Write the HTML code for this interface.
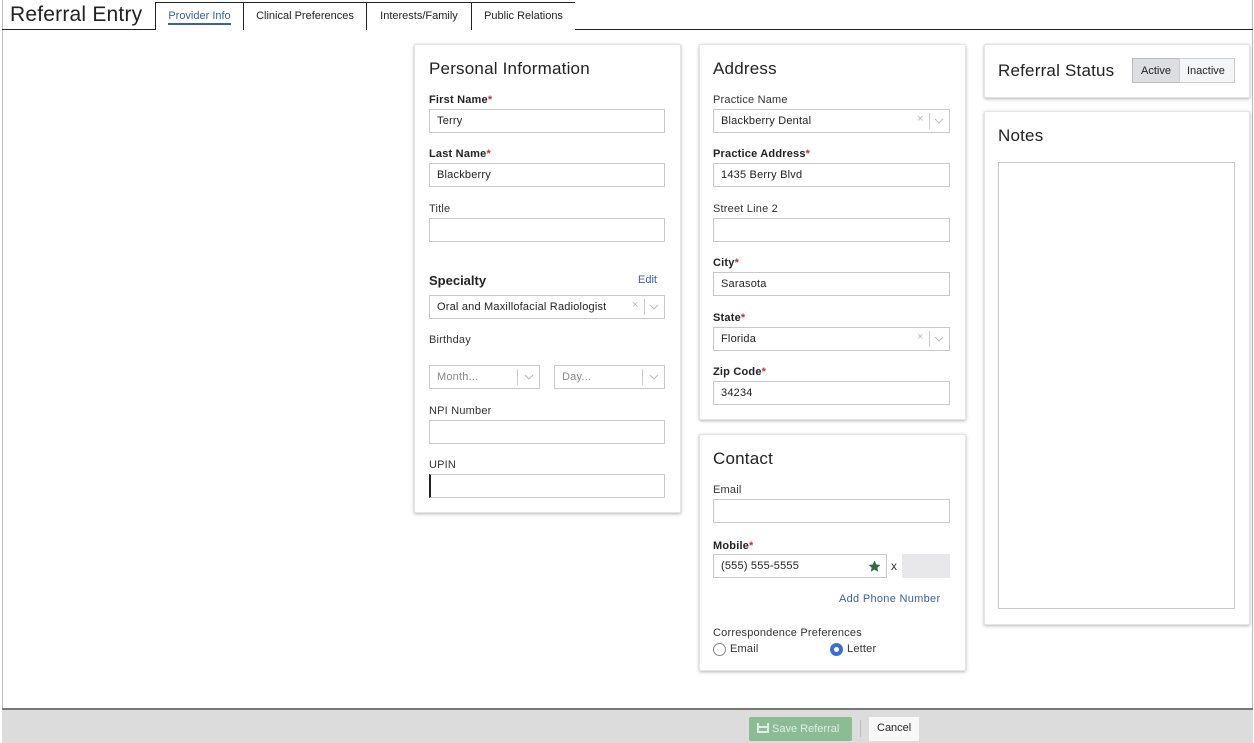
<!DOCTYPE html>
<html><head><meta charset="utf-8"><style>
*{box-sizing:border-box;margin:0;padding:0}
body{width:1254px;height:743px;position:relative;background:#fff;font-family:"Liberation Sans",sans-serif;color:#222;overflow:hidden;font-size:11px}
.a{position:absolute}
.frame{left:2px;top:0;width:1251px;height:743px;border-left:1px solid #bbb;border-right:1px solid #bbb}
.hline{left:2px;top:29px;width:1251px;height:1px;background:#222}
.title{left:10px;top:3px;font-size:21px;color:#222;letter-spacing:0.2px}
.tab{top:2px;height:28px;border:1px solid #222;border-bottom:none;background:#fff;font-size:11px;padding:7px 0 0 0;text-align:center}
.card{background:#fff;border-radius:2px;box-shadow:0 1px 3px rgba(0,0,0,.3);border:1px solid #e4e4e4}
.h{font-size:17px;color:#222;letter-spacing:0.2px}
.lb{font-size:11px;color:#333;letter-spacing:0.2px}
.b{font-weight:bold;color:#222}
.req{color:#b33}
.in{height:24px;border:1px solid #c8c8c8;background:#fff;font-size:11px;padding:5px 0 0 7px;color:#222;letter-spacing:0.2px}
.sel .ctl{position:absolute;right:0;top:3px;height:16px;width:34px;color:#bbb;font-size:11px}
.sel .ctl span.x{position:absolute;left:2px;top:0}
.sel .ctl span.bar{position:absolute;left:14px;top:0;width:1px;height:16px;background:#ccc}
.sel .ctl svg{position:absolute;left:19px;top:5px}
.ph{color:#888}
</style></head><body>
<div class="a frame"></div>
<div class="a hline"></div>
<div class="a title">Referral Entry</div>
<div class="a tab" style="left:155px;width:89px;color:#3a5ea8"><span style="border-bottom:2px solid #3a5ea8;padding-bottom:1px">Provider Info</span></div>
<div class="a tab" style="left:243px;width:124px">Clinical Preferences</div>
<div class="a tab" style="left:366px;width:106px">Interests/Family</div>
<div class="a tab" style="left:471px;width:104px;border-right:none">Public Relations</div>

<div class="a card" style="left:414px;top:44px;width:267px;height:469px"></div>
<div class="a h" style="left:429px;top:59px">Personal Information</div>
<div class="a lb b" style="left:429px;top:94px">First Name<span class="req">*</span></div>
<div class="a in" style="left:429px;top:109px;width:236px">Terry</div>
<div class="a lb b" style="left:429px;top:148px">Last Name<span class="req">*</span></div>
<div class="a in" style="left:429px;top:163px;width:236px">Blackberry</div>
<div class="a lb" style="left:429px;top:203px">Title</div>
<div class="a in" style="left:429px;top:218px;width:236px"></div>
<div class="a b" style="left:429px;top:273px;font-size:13px">Specialty</div>
<div class="a" style="left:638px;top:274px;color:#3a5ea8">Edit</div>
<div class="a in sel" style="left:429px;top:295px;width:236px">Oral and Maxillofacial Radiologist<div class="ctl"><span class="x">×</span><span class="bar"></span><svg width="10" height="6"><path d="M1 1L5 5L9 1" stroke="#bbb" fill="none"/></svg></div></div>
<div class="a lb" style="left:429px;top:334px">Birthday</div>
<div class="a in sel ph" style="left:429px;top:365px;width:111px">Month...<div class="ctl" style="width:22px"><span class="bar" style="left:0"></span><svg width="10" height="6" style="left:7px"><path d="M1 1L5 5L9 1" stroke="#bbb" fill="none"/></svg></div></div>
<div class="a in sel ph" style="left:554px;top:365px;width:111px">Day...<div class="ctl" style="width:22px"><span class="bar" style="left:0"></span><svg width="10" height="6" style="left:7px"><path d="M1 1L5 5L9 1" stroke="#bbb" fill="none"/></svg></div></div>
<div class="a lb" style="left:429px;top:405px">NPI Number</div>
<div class="a in" style="left:429px;top:420px;width:236px"></div>
<div class="a lb" style="left:429px;top:459px">UPIN</div>
<div class="a in" style="left:429px;top:474px;width:236px;border-left:2px solid #222"></div>

<div class="a card" style="left:699px;top:44px;width:267px;height:376px"></div>
<div class="a h" style="left:713px;top:59px">Address</div>
<div class="a lb" style="left:713px;top:94px">Practice Name</div>
<div class="a in sel" style="left:713px;top:109px;width:237px">Blackberry Dental<div class="ctl"><span class="x">×</span><span class="bar"></span><svg width="10" height="6"><path d="M1 1L5 5L9 1" stroke="#bbb" fill="none"/></svg></div></div>
<div class="a lb b" style="left:713px;top:148px">Practice Address<span class="req">*</span></div>
<div class="a in" style="left:713px;top:163px;width:237px">1435 Berry Blvd</div>
<div class="a lb" style="left:713px;top:203px">Street Line 2</div>
<div class="a in" style="left:713px;top:218px;width:237px"></div>
<div class="a lb b" style="left:713px;top:257px">City<span class="req">*</span></div>
<div class="a in" style="left:713px;top:272px;width:237px">Sarasota</div>
<div class="a lb b" style="left:713px;top:312px">State<span class="req">*</span></div>
<div class="a in sel" style="left:713px;top:327px;width:237px">Florida<div class="ctl"><span class="x">×</span><span class="bar"></span><svg width="10" height="6"><path d="M1 1L5 5L9 1" stroke="#bbb" fill="none"/></svg></div></div>
<div class="a lb b" style="left:713px;top:366px">Zip Code<span class="req">*</span></div>
<div class="a in" style="left:713px;top:381px;width:237px">34234</div>

<div class="a card" style="left:699px;top:434px;width:267px;height:237px"></div>
<div class="a h" style="left:713px;top:449px">Contact</div>
<div class="a lb" style="left:713px;top:484px">Email</div>
<div class="a in" style="left:713px;top:499px;width:237px"></div>
<div class="a lb b" style="left:713px;top:540px">Mobile<span class="req">*</span></div>
<div class="a in" style="left:713px;top:554px;width:174px">(555) 555-5555
<svg class="a" style="left:154px;top:5px" width="13" height="13" viewBox="0 0 24 24"><path d="M12 1l3.3 7.2 7.7.7-5.8 5.2 1.8 7.7L12 17.8 5 21.8l1.8-7.7L1 8.9l7.7-.7z" fill="#2e6e3e"/></svg></div>
<div class="a" style="left:891px;top:559px;font-size:12px;color:#333">x</div>
<div class="a" style="left:902px;top:554px;width:48px;height:24px;background:#e8e8ea"></div>
<div class="a" style="left:839px;top:593px;color:#3a5ea8;letter-spacing:0.3px">Add Phone Number</div>
<div class="a lb" style="left:713px;top:627px">Correspondence Preferences</div>
<div class="a" style="left:713px;top:643px;width:13px;height:13px;border:1px solid #888;border-radius:50%"></div>
<div class="a lb" style="left:730px;top:643px">Email</div>
<div class="a" style="left:830px;top:643px;width:13px;height:13px;border:4px solid #3a6fd0;border-radius:50%;background:#fff"></div>
<div class="a lb" style="left:847px;top:643px">Letter</div>

<div class="a card" style="left:984px;top:44px;width:266px;height:54px"></div>
<div class="a h" style="left:998px;top:61px">Referral Status</div>
<div class="a" style="left:1132px;top:58px;width:48px;height:25px;background:#dcdee2;border:1px solid #bbb;font-size:11px;padding:6px 0 0 8px">Active</div>
<div class="a" style="left:1179px;top:58px;width:56px;height:25px;background:#f4f5f7;border:1px solid #ccc;font-size:11px;padding:6px 0 0 7px">Inactive</div>

<div class="a card" style="left:984px;top:111px;width:266px;height:514px"></div>
<div class="a h" style="left:998px;top:126px">Notes</div>
<div class="a" style="left:998px;top:162px;width:237px;height:447px;border:1px solid #c8c8c8"></div>

<div class="a" style="left:2px;top:708px;width:1251px;height:35px;background:#dcdcdc;border-top:2px solid #777"></div>
<div class="a" style="left:749px;top:717px;width:103px;height:24px;background:#8cbc94;border-radius:2px;color:#dfeee2;font-size:11px;padding:5px 0 0 8px">
<svg width="12" height="11" style="vertical-align:-1px" viewBox="0 0 12 11"><path d="M1 1v9h10V1M1 5h10" stroke="#dfeee2" stroke-width="2" fill="none"/></svg> Save Referral</div>
<div class="a" style="left:860px;top:720px;width:1px;height:17px;background:#bbb"></div>
<div class="a" style="left:869px;top:717px;width:50px;height:24px;background:#f8f8f8;font-size:11px;padding:5px 0 0 8px">Cancel</div>
</body></html>
